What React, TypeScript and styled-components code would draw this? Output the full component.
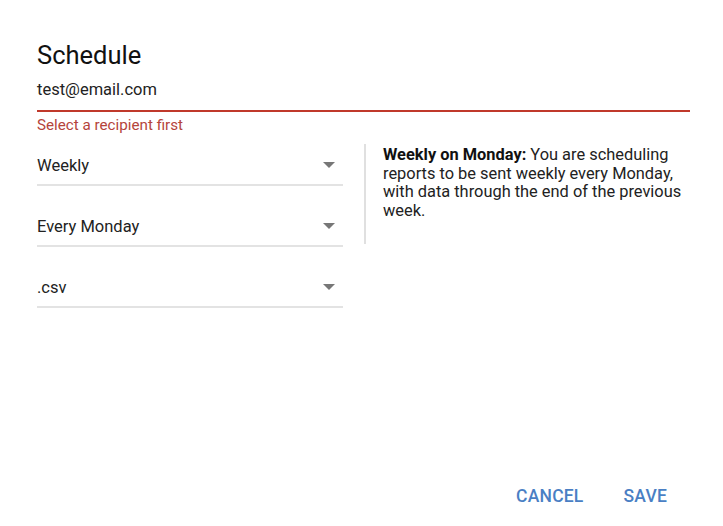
import React from "react";
import styled, { createGlobalStyle } from "styled-components";

const Global = createGlobalStyle`
  html, body { margin: 0; padding: 0; background: #fff; }
  body { font-family: Roboto, "Noto Sans", sans-serif; color: #212121; }
`;

const Dialog = styled.div`
  width: 723px;
  height: 526px;
  box-sizing: border-box;
  padding: 38px 33px 0 37px;
  display: flex;
  flex-direction: column;
`;

const Title = styled.h1`
  margin: 0;
  font-size: 25.5px;
  font-weight: 400;
  line-height: 34px;
  color: #111;
`;

const EmailField = styled.div`
  margin-top: 6px;
  height: 34px;
  display: flex;
  align-items: center;
  font-size: 16.5px;
  color: #222;
  border-bottom: 2px solid #c0392b;
  box-sizing: border-box;
  padding-bottom: 9px;
`;

const ErrorText = styled.div`
  margin-top: 4px;
  font-size: 15.2px;
  line-height: 18px;
  color: #b5443b;
`;

const Body = styled.div`
  margin-top: 10px;
  display: flex;
  align-items: flex-start;
`;

const Selects = styled.div`
  width: 306px;
  flex-shrink: 0;
  display: flex;
  flex-direction: column;
`;

const Select = styled.div<{ $first?: boolean }>`
  height: 42px;
  margin-top: ${(p) => (p.$first ? "0" : "19px")};
  display: flex;
  align-items: center;
  justify-content: space-between;
  border-bottom: 2px solid #e3e3e3;
  box-sizing: border-box;
  font-size: 16.5px;
  color: #222;
  padding: 2px 8px 0 0;
`;

const Arrow = styled.span`
  width: 0;
  height: 0;
  border-left: 6px solid transparent;
  border-right: 6px solid transparent;
  border-top: 6px solid #777;
`;

const Info = styled.div`
  flex: 1;
  margin-left: 21px;
  border-left: 2px solid #e0e0e0;
  padding: 2px 0 0 17px;
  min-height: 98px;
  font-size: 16.4px;
  line-height: 18.5px;
  color: #222;
`;

const Bold = styled.b`
  font-weight: 700;
  color: #111;
`;

const Footer = styled.div`
  margin-top: auto;
  height: 42px;
  display: flex;
  justify-content: flex-end;
  align-items: flex-start;
  gap: 40px;
  padding-right: 23px;
`;

const Button = styled.button`
  background: none;
  border: none;
  padding: 0;
  font-family: Roboto, sans-serif;
  font-weight: 500;
  font-size: 17.5px;
  letter-spacing: 0.2px;
  color: #4a7fc4;
  line-height: 24px;
  cursor: pointer;
`;

export default function App() {
  return (
    <>
      <Global />
      <Dialog>
        <Title>Schedule</Title>
        <EmailField>test@email.com</EmailField>
        <ErrorText>Select a recipient first</ErrorText>
        <Body>
          <Selects>
            <Select $first>
              Weekly
              <Arrow />
            </Select>
            <Select>
              Every Monday
              <Arrow />
            </Select>
            <Select>
              .csv
              <Arrow />
            </Select>
          </Selects>
          <Info>
            <Bold>Weekly on Monday:</Bold> You are scheduling reports to be sent weekly every Monday, with data through the end of the previous week.
          </Info>
        </Body>
        <Footer>
          <Button>CANCEL</Button>
          <Button>SAVE</Button>
        </Footer>
      </Dialog>
    </>
  );
}
